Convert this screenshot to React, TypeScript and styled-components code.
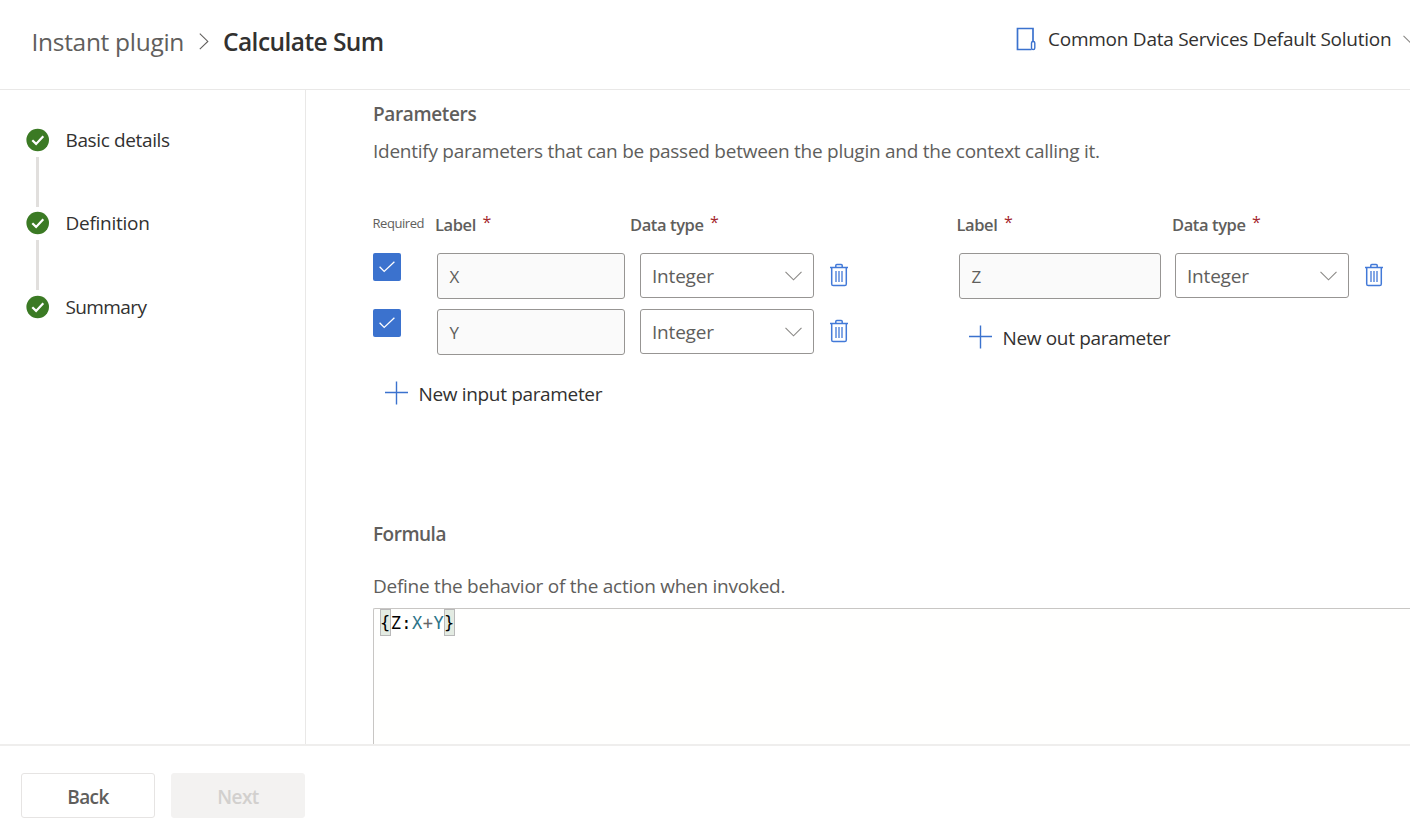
import React from "react";
import styled, { createGlobalStyle } from "styled-components";

const colors = {
  text: "#323130",
  muted: "#605e5c",
  blue: "#3b72ce",
  green: "#3b7a24",
  line: "#e9e8e7",
  field: "#979593",
  red: "#a4262c",
};

const GlobalStyle = createGlobalStyle`
  * { box-sizing: border-box; }
  body { margin: 0; background: #fff; overflow: hidden; }
  button { font: inherit; color: inherit; background: none; border: 0; padding: 0; }
  svg { display: block; flex: none; fill: none; }
`;

const Page = styled.div`
  display: flex;
  flex-direction: column;
  width: 100%;
  height: 836px;
  overflow: hidden;
  color: ${colors.text};
  font: 400 19px/27px "Open Sans", "Noto Sans", sans-serif;
  letter-spacing: -0.255px;
  white-space: nowrap;
`;

const Header = styled.header`
  display: flex;
  justify-content: space-between;
  flex: none;
  height: 90px;
  padding: 26px 0 0 31.5px;
  border-bottom: 1px solid ${colors.line};
`;

const Breadcrumb = styled.nav`
  display: flex;
  height: 32px;
  font-size: 24.5px;
  line-height: 32px;
`;

const Crumb = styled.span`
  width: 167.5px;
  color: ${colors.muted};
  letter-spacing: -0.3px;
`;

const CurrentCrumb = styled.span`
  margin-left: 14px;
  font-weight: 600;
  letter-spacing: -0.56px;
`;

const CrumbChevron = styled.svg`
  margin-top: 7px;
`;

const SolutionPicker = styled.button`
  display: flex;
  align-items: center;
  width: 394px;
  height: 27px;
  overflow: hidden;
  letter-spacing: -0.25px;
`;

const SolutionName = styled.span`
  width: 355px;
  margin-left: 12px;
  flex: none;
  text-align: left;
`;

const SolutionIcon = styled.svg`
  margin-top: -2px;
`;

const Body = styled.div`
  display: flex;
  flex: 1;
  min-height: 0;
`;

const Sidebar = styled.aside`
  flex: none;
  width: 306px;
  padding: 37px 0 0 26px;
  border-right: 1px solid ${colors.line};
`;

const Step = styled.div`
  display: flex;
  height: 27px;
`;

const StepLabel = styled.span<{ $spacing: number }>`
  margin-left: 15.5px;
  letter-spacing: ${(p) => p.$spacing}px;
`;

const StepLine = styled.div`
  width: 3px;
  height: 50px;
  margin: 3px 0 3.4px 10px;
  background: #e1dfdd;
`;

const Content = styled.main`
  flex: 1;
  min-width: 0;
  display: flex;
  flex-direction: column;
  padding: 11px 0 0 67px;
  overflow: hidden;
  color: ${colors.muted};
`;

const SectionTitle = styled.h2<{ $spacing?: number }>`
  margin: 0;
  font-size: 19px;
  line-height: 27px;
  font-weight: 600;
  letter-spacing: ${(p) => p.$spacing ?? -0.36}px;
`;

const Description = styled.p<{ $gap: number }>`
  margin: ${(p) => p.$gap}px 0 0;
`;

const Groups = styled.div`
  display: flex;
  height: 308px;
  margin-top: 48px;
`;

const InputGroup = styled.section`
  flex: none;
  width: 583.5px;
`;

const OutputGroup = styled.section`
  flex: none;
`;

const ColumnHeads = styled.div`
  display: flex;
  height: 24px;
  margin-bottom: 16px;
  font-size: 16.5px;
  line-height: 24px;
  font-weight: 600;
  letter-spacing: -0.4px;
`;

const RequiredHead = styled.span`
  width: 62px;
  font-size: 13px;
  line-height: 20px;
  font-weight: 400;
  letter-spacing: -0.45px;
  text-indent: -0.5px;
`;

const Head = styled.span<{ $width?: number }>`
  width: ${(p) => (p.$width ? `${p.$width}px` : "auto")};
`;

const Star = styled.span`
  margin-left: 6.5px;
  color: ${colors.red};
  font-size: 16px;
  font-weight: 400;
  line-height: 0;
  vertical-align: 3px;
`;

const ParamRows = styled.div`
  display: flex;
  flex-direction: column;
  gap: 10px;
`;

const ParamRow = styled.div<{ $indent?: number }>`
  display: flex;
  align-items: flex-start;
  height: 46px;
  padding-left: ${(p) => p.$indent ?? 0}px;
`;

const CheckBox = styled.span`
  display: flex;
  align-items: center;
  justify-content: center;
  width: 28px;
  height: 28px;
  margin-right: 36px;
  border-radius: 2px;
  background: ${colors.blue};
`;

const NameField = styled.div<{ $width: number }>`
  width: ${(p) => p.$width}px;
  height: 46px;
  padding-left: 11.5px;
  border: 1px solid ${colors.field};
  border-radius: 3px;
  background: #fafafa;
  font-size: 17px;
  line-height: 45px;
`;

const TypeSelect = styled.div<{ $gap: number }>`
  display: flex;
  align-items: center;
  justify-content: space-between;
  width: 174px;
  height: 45px;
  margin: 0 16px 0 ${(p) => p.$gap}px;
  padding: 1px 11px 0 11px;
  border: 1px solid ${colors.field};
  border-radius: 3px;
  letter-spacing: -0.2px;
`;

const TrashIcon = styled.svg`
  margin-top: 10px;
`;

const AddButton = styled.button<{ $indent: number }>`
  display: flex;
  align-items: center;
  height: 30px;
  margin: 23px 0 0 ${(p) => p.$indent}px;
  gap: 10.5px;
  color: ${colors.text};
  letter-spacing: -0.34px;
`;

const AddLabel = styled.span`
  padding-top: 2px;
`;

const Editor = styled.div`
  flex: 1;
  margin-top: 8px;
  padding: 0 0 0 6px;
  border: solid #c8c6c4;
  border-width: 1px 0 0 1px;
  border-radius: 2px 0 0 0;
  background: #fffffe;
  color: #000;
`;

const Code = styled.code`
  display: flex;
  height: 27px;
  font: 17px/29px "DejaVu Sans Mono", monospace;
  letter-spacing: 0.43px;
`;

const Bracket = styled.span`
  display: flex;
  justify-content: center;
  width: 10.7px;
  outline: 1px solid #b9b9b9;
  outline-offset: -1px;
  background: #e3ebe2;
`;

const Variable = styled.span`
  color: #2b7489;
`;

const Operator = styled.span`
  color: #666;
`;

const Footer = styled.footer`
  display: flex;
  gap: 16px;
  flex: none;
  height: 92px;
  padding: 27px 0 0 21px;
  border-top: 2px solid #efeeed;
`;

const ActionButton = styled.button<{ $disabled?: boolean }>`
  width: 134px;
  height: 45px;
  padding-top: 3px;
  border: 1px solid ${(p) => (p.$disabled ? "#f3f2f1" : "#e6e4e3")};
  border-radius: 3px;
  background: ${(p) => (p.$disabled ? "#f3f2f1" : "#fff")};
  color: ${(p) => (p.$disabled ? "#d2d0ce" : colors.muted)};
  font-weight: 600;
  letter-spacing: -0.55px;
`;

const StepDone = () => (
  <svg width="24" height="26" viewBox="0 0 24 26">
    <circle cx="11.7" cy="13" r="11.3" fill={colors.green} />
    <path d="M6.3 13.2l3.8 3.7 7.2-7.6" stroke="#fff" strokeWidth="2.2" />
  </svg>
);

const Chevron = () => (
  <svg width="17" height="10" viewBox="0 0 17 10">
    <path d="M.5.8l8 8 8-8" stroke="#8a8886" strokeWidth="1.1" />
  </svg>
);

const Plus = () => (
  <svg width="23" height="24" viewBox="0 0 23 24">
    <path d="M11.5.5v23M0 11.5h23" stroke={colors.blue} strokeWidth="1.4" />
  </svg>
);

const Trash = () => (
  <TrashIcon width="18" height="24" viewBox="0 0 18 24">
    <path
      d="M0 4.5h18M5.8 4.5V2.6q0-1 1-1h4.4q1 0 1 1v1.9M1.7 4.5v16.4q0 1.6 1.6 1.6h11.4q1.6 0 1.6-1.6V4.5"
      stroke="#4279d8"
      strokeWidth="1.5"
    />
    <path d="M6 8v11M9 8v11M12 8v11" stroke="#4279d8" strokeWidth="1.3" />
  </TrashIcon>
);

const RequiredCheck = () => (
  <CheckBox>
    <svg width="16" height="12" viewBox="0 0 16 12">
      <path d="M.6 5.8l4.6 4.6L15.4.8" stroke="#fff" strokeWidth="1.3" />
    </svg>
  </CheckBox>
);

const Integer = ({ gap }: { gap: number }) => (
  <TypeSelect $gap={gap}>
    Integer
    <Chevron />
  </TypeSelect>
);

const steps = [
  { name: "Basic details", spacing: -0.37 },
  { name: "Definition", spacing: -0.27 },
  { name: "Summary", spacing: -0.6 },
];

export default function App() {
  return (
    <Page>
      <GlobalStyle />
      <Header>
        <Breadcrumb>
          <Crumb>Instant plugin</Crumb>
          <CrumbChevron width="10" height="17" viewBox="0 0 10 17">
            <path d="M.8.7l8 7.7-8 7.7" stroke="#605e5c" strokeWidth="1.1" />
          </CrumbChevron>
          <CurrentCrumb>Calculate Sum</CurrentCrumb>
        </Breadcrumb>
        <SolutionPicker>
          <SolutionIcon width="20" height="24" viewBox="0 0 20 24">
            <path d="M17 14.5V1.5H1.5v21h14" stroke={colors.blue} strokeWidth="1.7" />
            <rect x="15.5" y="14.5" width="3.3" height="8" rx="1.6" stroke={colors.blue} strokeWidth="1.4" />
          </SolutionIcon>
          <SolutionName>Common Data Services Default Solution</SolutionName>
          <Chevron />
        </SolutionPicker>
      </Header>
      <Body>
        <Sidebar>
          {steps.map((step, i) => (
            <React.Fragment key={step.name}>
              {i > 0 && <StepLine />}
              <Step>
                <StepDone />
                <StepLabel $spacing={step.spacing}>{step.name}</StepLabel>
              </Step>
            </React.Fragment>
          ))}
        </Sidebar>
        <Content>
          <SectionTitle>Parameters</SectionTitle>
          <Description $gap={10}>
            Identify parameters that can be passed between the plugin and the context calling it.
          </Description>
          <Groups>
            <InputGroup>
              <ColumnHeads>
                <RequiredHead>Required</RequiredHead>
                <Head $width={195}>
                  Label<Star>*</Star>
                </Head>
                <Head>
                  Data type<Star>*</Star>
                </Head>
              </ColumnHeads>
              <ParamRows>
                {["X", "Y"].map((name) => (
                  <ParamRow key={name}>
                    <RequiredCheck />
                    <NameField $width={188}>{name}</NameField>
                    <Integer gap={15} />
                    <Trash />
                  </ParamRow>
                ))}
              </ParamRows>
              <AddButton $indent={12}>
                <Plus />
                <AddLabel>New input parameter</AddLabel>
              </AddButton>
            </InputGroup>
            <OutputGroup>
              <ColumnHeads>
                <Head $width={215.5}>
                  Label<Star>*</Star>
                </Head>
                <Head>
                  Data type<Star>*</Star>
                </Head>
              </ColumnHeads>
              <ParamRows>
                <ParamRow $indent={2.5}>
                  <NameField $width={202}>Z</NameField>
                  <Integer gap={14} />
                  <Trash />
                </ParamRow>
              </ParamRows>
              <AddButton $indent={12.5}>
                <Plus />
                <AddLabel>New out parameter</AddLabel>
              </AddButton>
            </OutputGroup>
          </Groups>
          <SectionTitle $spacing={-0.5}>Formula</SectionTitle>
          <Description $gap={25}>Define the behavior of the action when invoked.</Description>
          <Editor>
            <Code>
              <Bracket>{"{"}</Bracket>
              <span>Z:</span>
              <Variable>X</Variable>
              <Operator>+</Operator>
              <Variable>Y</Variable>
              <Bracket>{"}"}</Bracket>
            </Code>
          </Editor>
        </Content>
      </Body>
      <Footer>
        <ActionButton>Back</ActionButton>
        <ActionButton $disabled>Next</ActionButton>
      </Footer>
    </Page>
  );
}
